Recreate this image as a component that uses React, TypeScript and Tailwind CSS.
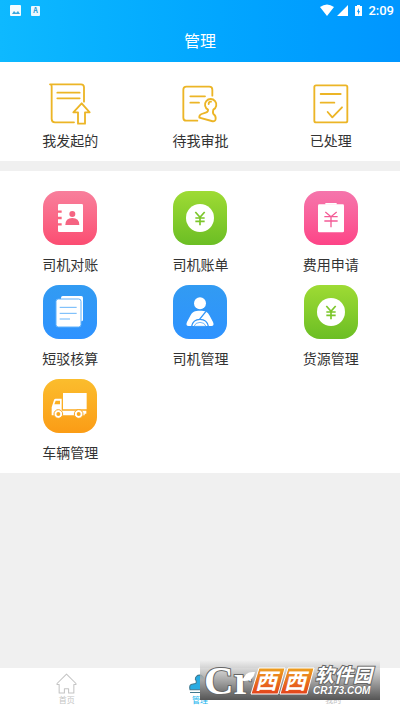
import React from "react";

type Item = { label: string; icon: React.ReactNode; tone?: string };

const LineIcon = ({ children }: { children: React.ReactNode }) => (
  <svg viewBox="0 0 162 132" className="h-[44px] w-[54px]" fill="none" stroke="#ecb526" strokeWidth="5.5" strokeLinecap="round" strokeLinejoin="round" aria-hidden="true">
    {children}
  </svg>
);

const TileIcon = ({ children }: { children: React.ReactNode }) => (
  <svg viewBox="0 0 162 162" className="size-[54px]" fill="#fff" aria-hidden="true">
    {children}
  </svg>
);

const YuanCoin = () => (
  <TileIcon>
    <circle cx="81" cy="81" r="42" />
    <path d="M67 63l14 16 14-16M81 79v24M67 81h28M67 91h28" fill="none" stroke="#7cc62a" strokeWidth="5" />
  </TileIcon>
);

const approvals: Item[] = [
  {
    label: "我发起的",
    icon: (
      <LineIcon>
        <path d="M93 121H36q-10 0-10-10V14q0-7-5-7h93q9 0 9 9v43M43 32h67M43 49h67" />
        <path d="M116 64l-25 27h14v34h21V91h14z" />
      </LineIcon>
    ),
  },
  {
    label: "待我审批",
    icon: (
      <LineIcon>
        <path d="M73 116H40q-9 0-9-9V23q0-9 9-9h69q9 0 9 9v18M52 43h44M52 62h26" />
        <path d="M105 83q1 7-7 9l-12 4q-8 3-7 11l37 10q11 3 12-6 1-9-6-14-4-4-1-14a17 17 0 1 0-16 0zM107 66q0-7 7-7" />
      </LineIcon>
    ),
  },
  {
    label: "已处理",
    icon: (
      <LineIcon>
        <rect x="31" y="10" width="99" height="111" rx="5" />
        <path d="M50 36h60M50 62h41M71 90l14 16 29-30" />
      </LineIcon>
    ),
  },
];

const modules: Item[] = [
  {
    label: "司机对账",
    tone: "from-[#f87f9c] to-[#fb4c72]",
    icon: (
      <TileIcon>
        <rect x="45" y="39" width="75" height="84" rx="4" />
        <path d="M43 62h13M43 81h13M43 100h13" stroke="#f9647f" strokeWidth="7" />
        <g fill="#f56482">
          <circle cx="88" cy="69" r="9" />
          <path d="M67 102q0-21 21-21t21 21z" />
        </g>
      </TileIcon>
    ),
  },
  { label: "司机账单", tone: "from-[#9edb34] to-[#6bbe24]", icon: <YuanCoin /> },
  {
    label: "费用申请",
    tone: "from-[#f575ac] to-[#fd4387]",
    icon: (
      <TileIcon>
        <rect x="42" y="40" width="78" height="84" rx="4" />
        <path d="M64 36h34v5H64z" />
        <path d="M64 63l17 14 17-14M81 77v32M61 77h40M61 90h40" fill="none" stroke="#f45b96" strokeWidth="4" />
      </TileIcon>
    ),
  },
  {
    label: "短驳核算",
    tone: "from-[#329bf2] to-[#2e92ff]",
    icon: (
      <TileIcon>
        <rect x="54" y="33" width="66" height="76" rx="5" />
        <rect x="39" y="42" width="75" height="84" rx="7" stroke="#5eb1fc" strokeWidth="3" />
        <path d="M50 67h51M50 85h51M50 102h31" stroke="#68b5fa" strokeWidth="3" />
      </TileIcon>
    ),
  },
  {
    label: "司机管理",
    tone: "from-[#329bf2] to-[#2e92ff]",
    icon: (
      <TileIcon>
        <circle cx="81" cy="55" r="18" />
        <path d="M81 77c-16 0-23 3-29 15l-10 19q-5 12 5 12h68q10 0 5-12l-10-19c-6-12-13-15-29-15z" />
        <path d="M56 124q4-21 25-21t25 21M99 79L79 104" fill="none" stroke="#3195f8" strokeWidth="4" />
        <path d="M63 124q4-12 18-12t18 12z" stroke="#3195f8" strokeWidth="2" />
      </TileIcon>
    ),
  },
  { label: "货源管理", tone: "from-[#9edb34] to-[#6bbe24]", icon: <YuanCoin /> },
  {
    label: "车辆管理",
    tone: "from-[#fbbd2d] to-[#fb9c15]",
    icon: (
      <TileIcon>
        <path d="M60 42h71v49H60zM26 108V85l7-22q1-4 5-4h18v36h74v9h-5v5H26z" />
        <path d="M34 76l4-11h13v11z" fill="#fbb024" />
        <g stroke="#fba71e" strokeWidth="3">
          <circle cx="46" cy="105" r="13" />
          <circle cx="107" cy="105" r="13" />
        </g>
        <g fill="#fba71e">
          <circle cx="46" cy="105" r="6" />
          <circle cx="107" cy="105" r="6" />
        </g>
      </TileIcon>
    ),
  },
];

const StatusBar = () => (
  <div className="flex h-[21px] items-center justify-between pl-[10px] pr-[6px]">
    <div className="flex items-center gap-[10px]">
      <svg viewBox="0 0 11 11" className="size-[11px]" aria-hidden="true">
        <rect width="11" height="11" rx="1" fill="#f4fcff" />
        <path d="M2 9l2-3 2 2 2-2 2 3z" fill="#3aa7dd" />
      </svg>
      <span className="flex h-[10px] w-[9px] items-center justify-center rounded-[1px] bg-[#e9f8ff] text-[7px] font-bold text-[#2397d4]">A</span>
    </div>
    <div className="flex items-center">
      <svg viewBox="0 0 44 13" className="h-[13px] w-[44px]" fill="#fff" aria-hidden="true">
        <path d="M0 3q7-5 14 0L7 12zM28 1v11H17zM35 2h2V1h3v1h2v10h-7z" />
        <path d="M39 4l-2 4h1v3l2-4h-1V4z" fill="#079dff" />
      </svg>
      <time className="ml-[4px] font-[Roboto] text-[13px] leading-[20px] font-medium">2:09</time>
    </div>
  </div>
);

const Watermark = () => (
  <aside className="pointer-events-none absolute right-[20px] bottom-[10px] h-[40px] w-[180px] bg-linear-to-b from-[#f0f0f0]/20 via-[#a8a8a8] to-[#555]">
    <svg viewBox="0 0 180 40" className="h-[40px] w-[180px] overflow-visible" aria-label="Cr 西西软件园 CR173.COM" role="img">
      <defs>
        <linearGradient id="badge" x1="0" y1="0" x2="0" y2="1">
          <stop offset="0" stopColor="#eda021" />
          <stop offset="1" stopColor="#e4431c" />
        </linearGradient>
      </defs>
      <text x="4" y="34" fontSize="41" fill="#fff" stroke="#666" strokeWidth="2" paintOrder="stroke" fontWeight="bold" fontFamily="Liberation Serif, serif">Cr</text>
      <path d="M43 21q1-10 12-9-2 10-12 9z" fill="#fff" />
      <path d="M59 8h26l-7 26H51zM88 8h26l-7 26H80z" fill="url(#badge)" stroke="#fff" strokeWidth="1" />
      <g fill="#fff" fontFamily="Noto Sans CJK SC, sans-serif" fontWeight="bold" fontStyle="italic">
        <text x="55" y="29" fontSize="22">西</text>
        <text x="84" y="29" fontSize="22">西</text>
        <text x="115" y="22" fontSize="19" stroke="#666" strokeWidth="2" paintOrder="stroke">软件园</text>
      </g>
      <text x="113" y="34" fontSize="10" fill="#fff" stroke="#666" strokeWidth="1" paintOrder="stroke" fontStyle="italic" fontWeight="bold" fontFamily="Liberation Sans, sans-serif">CR173.COM</text>
    </svg>
  </aside>
);

export default function App() {
  return (
    <div className="relative flex min-h-screen flex-col bg-[#f0f0f0] font-['Noto_Sans_CJK_SC',sans-serif] text-[#333]">
      <header className="bg-linear-to-r from-[#0eb9ff] to-[#0096ff] text-white">
        <StatusBar />
        <h1 className="h-[41px] text-center text-[16px] leading-[38px]">管理</h1>
      </header>

      <main className="flex-1">
        <section className="grid grid-cols-3 bg-white pt-[20px] pr-[4px] pb-[11px] pl-[5px]">
          {approvals.map((item) => (
            <button key={item.label} type="button" className="flex flex-col items-center gap-[4px] text-[14px] leading-[20px]">
              {item.icon}
              {item.label}
            </button>
          ))}
        </section>
        <section className="mt-[10px] grid grid-cols-3 gap-y-[11px] bg-white pt-[20px] pr-[4px] pb-[11px] pl-[5px]">
          {modules.map((item) => (
            <button key={item.label} type="button" className="flex flex-col items-center gap-[9px] text-[14px] leading-[20px]">
              <span className={`rounded-[16px] bg-linear-to-b ${item.tone}`}>{item.icon}</span>
              {item.label}
            </button>
          ))}
        </section>
      </main>

      <nav className="grid h-[42px] grid-cols-3 bg-white text-[8px] leading-[12px] text-[#c4c4c4]">
        <a href="#home" className="flex flex-col items-center pt-[5px]">
          <svg viewBox="0 0 20 20" className="size-[21px]" fill="none" stroke="#c4c4c4" strokeWidth="1" strokeLinejoin="round" aria-hidden="true">
            <path d="M10 1L1 10v1h2v8h5v-4h4v4h5v-8h2v-1z" />
          </svg>
          首页
        </a>
        <a href="#manage" className="flex flex-col items-center pt-[5px] text-[#22b5ee]">
          <svg viewBox="0 0 20 20" className="size-[21px]" fill="#28abe2" stroke="#40778d" strokeWidth="1" aria-hidden="true">
            <path d="M6 10q2-1 0-4a4 4 0 1 1 8 0q-2 3 0 4l4 1q2 1 1 5H1q-1-4 1-5zM1 18.500h18" />
          </svg>
          管理
        </a>
        <a href="#mine" className="flex flex-col items-center pt-[5px]">
          <svg viewBox="0 0 20 20" className="size-[21px]" fill="none" stroke="#c4c4c4" strokeWidth="1" aria-hidden="true">
            <circle cx="10" cy="6" r="4" />
            <path d="M2 19q0-7 8-7t8 7z" />
          </svg>
          我的
        </a>
      </nav>
      <Watermark />
    </div>
  );
}
